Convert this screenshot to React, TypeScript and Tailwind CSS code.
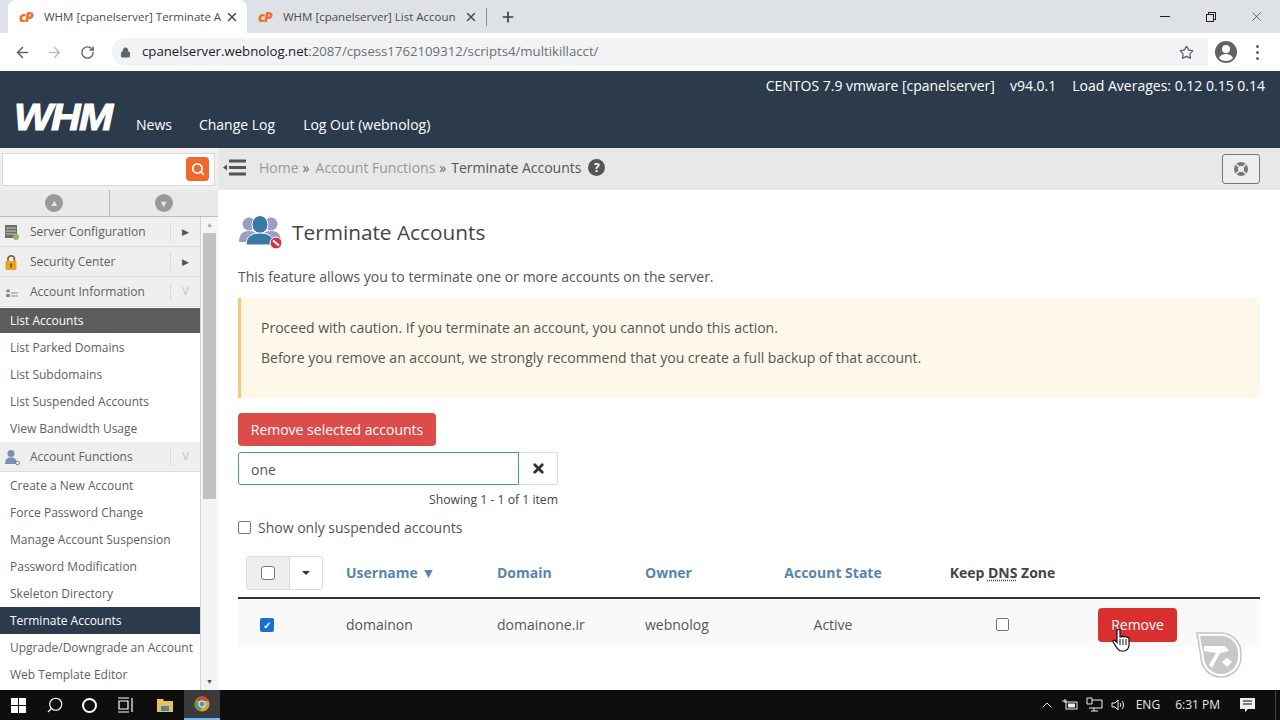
import { ArrowLeft, ArrowRight, ChevronUp, Lock, Plus, RotateCw, Search, Star, X } from 'lucide-react';

const infoLinks = ['List Parked Domains', 'List Subdomains', 'List Suspended Accounts', 'View Bandwidth Usage'];
const functionLinks = ['Create a New Account', 'Force Password Change', 'Manage Account Suspension', 'Password Modification', 'Skeleton Directory'];

function Favicon() {
  return <span className="w-[18px] shrink-0 text-[14px] leading-none font-extrabold italic tracking-[-1px] text-[#f0702c]">cP</span>;
}

function Tab({ title, active }: { title: string; active?: boolean }) {
  return (
    <div className={`flex h-[33px] w-[239px] items-center pl-[11px] pr-[8px] ${active ? 'rounded-t-lg bg-white' : ''}`}>
      <Favicon />
      <span className="ml-[7px] flex-1 overflow-hidden text-[11.5px] whitespace-nowrap text-[#4a4c50]">{title}</span>
      <X size={14} strokeWidth={2.5} className="shrink-0 text-[#4a4c50]" />
    </div>
  );
}

function SectionIcon({ kind }: { kind: string }) {
  if (kind === 'server') {
    return (
      <svg width="18" height="18" viewBox="0 0 18 18" className="shrink-0">
        <rect x="3" y="2" width="12" height="13" fill="#6b7168" />
        <path d="M4 5h10M4 8h10M4 11h10" stroke="#c9ccc6" strokeWidth="1" />
        <circle cx="14" cy="14" r="3" fill="#8fb96a" />
      </svg>
    );
  }
  if (kind === 'lock') {
    return (
      <svg width="18" height="18" viewBox="0 0 18 18" className="shrink-0">
        <path d="M6 8V6a3.2 3.2 0 0 1 6.400 0v2" fill="none" stroke="#7a6a3a" strokeWidth="1.800" />
        <rect x="3.500" y="8" width="11" height="9" rx="1" fill="#eda321" />
        <rect x="8.300" y="10.500" width="1.600" height="4" fill="#6d4c10" />
      </svg>
    );
  }
  if (kind === 'card') {
    return (
      <svg width="18" height="18" viewBox="0 0 18 18" className="shrink-0">
        <circle cx="6" cy="8" r="1.800" fill="#7f8c99" />
        <path d="M4 14v-3h4v3z" fill="#7f8c99" />
        <path d="M9 10h7M9 13h7" stroke="#a9b0b6" strokeWidth="1.500" />
      </svg>
    );
  }
  return (
    <svg width="18" height="18" viewBox="0 0 18 18" className="shrink-0">
      <circle cx="9" cy="5.500" r="3.500" fill="#7d8fb0" />
      <path d="M3 16c0-5 2.500-6.500 6-6.500s6 1.500 6 6.500z" fill="#7d8fb0" />
      <circle cx="15.500" cy="15" r="1.800" fill="#fff" stroke="#777" />
    </svg>
  );
}

function Section({ label, kind, open }: { label: string; kind: string; open?: boolean }) {
  return (
    <div className="flex h-[30px] items-center border-b border-[#dcdcdc] bg-[#efefef] pl-[2px] text-[12px] text-[#5f6062]">
      <SectionIcon kind={kind} />
      <span className="ml-[10px] flex-1">{label}</span>
      <span className="h-[18px] w-px bg-[#dadada]" />
      <span className="flex w-[29px] justify-center text-[9px] text-[#555]">
        {open ? <span className="text-[11px] text-[#c4c4c4]">V</span> : '▶'}
      </span>
    </div>
  );
}

function MenuLink({ label }: { label: string }) {
  return <div className="flex h-[27px] items-center pl-[10px] text-[12px] whitespace-nowrap text-[#5f6062]">{label}</div>;
}

function Sidebar() {
  return (
    <aside className="flex w-[218px] shrink-0 flex-col overflow-hidden">
      <div className="flex h-[27px] shrink-0 border-b border-[#bdbdbd] bg-[#e9e9e9]">
        <div className="flex flex-1 items-center justify-center border-r border-[#bdbdbd]">
          <span className="flex h-[18px] w-[18px] items-center justify-center rounded-full bg-[#9a9a9a] pb-px text-[9px] leading-none text-[#e9e9e9]">▲</span>
        </div>
        <div className="flex flex-1 items-center justify-center">
          <span className="flex h-[18px] w-[18px] items-center justify-center rounded-full bg-[#9a9a9a] pt-px text-[9px] leading-none text-[#e9e9e9]">▼</span>
        </div>
      </div>
      <div className="flex min-h-0 flex-1">
        <nav className="w-[201px] shrink-0 overflow-hidden border-r border-[#d4d4d4] bg-white">
          <Section label="Server Configuration" kind="server" />
          <Section label="Security Center" kind="lock" />
          <Section label="Account Information" kind="card" open />
          <div className="mt-px flex h-[25px] items-center bg-[#5c5c5c] pl-[10px] text-[12px] text-white">List Accounts</div>
          <div className="pt-px">
            {infoLinks.map((link) => (
              <MenuLink key={link} label={link} />
            ))}
          </div>
          <Section label="Account Functions" kind="user" open />
          {functionLinks.map((link) => (
            <MenuLink key={link} label={link} />
          ))}
          <div className="flex h-[27px] items-center bg-[#2c3b4b] pl-[10px] text-[12px] text-white">Terminate Accounts</div>
          <MenuLink label="Upgrade/Downgrade an Account" />
          <MenuLink label="Web Template Editor" />
        </nav>
        <div className="flex w-[17px] shrink-0 flex-col bg-[#f4f4f4] pl-[2px]">
          <div className="flex h-[16px] items-center justify-center pr-[2px] text-[7px] text-[#a8a8a8]">▲</div>
          <div className="h-[266px] w-[13px] bg-[#c1c1c1]" />
          <div className="flex-1" />
          <div className="flex h-[16px] items-center justify-center pr-[2px] text-[7px] text-[#505050]">▼</div>
        </div>
      </div>
    </aside>
  );
}

function TitleIcon() {
  return (
    <svg width="46" height="36" viewBox="0 0 46 36" className="shrink-0">
      <circle cx="11" cy="10" r="6.500" fill="#9a9dc6" />
      <path d="M1 28c0-8 4-11 10-11s10 3 10 11z" fill="#9a9dc6" />
      <circle cx="33" cy="10" r="6.500" fill="#9a9dc6" />
      <path d="M23 28c0-8 4-11 10-11s10 3 10 11z" fill="#9a9dc6" />
      <ellipse cx="22" cy="10.500" rx="8" ry="9" fill="#3a7aa8" stroke="#fff" />
      <path d="M8 31c0-9 6-12 14-12s14 3 14 12z" fill="#3a7aa8" stroke="#fff" />
      <circle cx="38" cy="29" r="6" fill="#d03546" stroke="#fff" />
      <path d="M35 26.500l6 5" stroke="#fff" strokeWidth="2" />
    </svg>
  );
}

function TableHeader() {
  return (
    <div className="grid h-[43px] grid-cols-[108px_151px_148px_118px_140px_199px_1fr] items-center pb-[6px] text-[14px] font-bold">
      <div className="pl-[8px]">
        <div className="flex h-[34px] w-[77px] rounded-[3px] border border-[#dcdcdc]">
          <div className="flex w-[43px] items-center justify-center border-r border-[#dcdcdc] bg-[#eeeeee]">
            <span className="h-[14px] w-[14px] rounded-[3px] border border-[#767676] bg-white" />
          </div>
          <div className="flex flex-1 items-center justify-center">
            <svg width="8" height="4" viewBox="0 0 8 4">
              <path d="M0 0h8L4 4z" fill="#333" />
            </svg>
          </div>
        </div>
      </div>
      <div className="text-[#5b84ab]">Username ▼</div>
      <div className="text-[#5b84ab]">Domain</div>
      <div className="text-[#5b84ab]">Owner</div>
      <div className="text-center text-[#5b84ab]">Account State</div>
      <div className="text-center text-[#444]">
        Keep <span className="underline decoration-dotted underline-offset-2">DNS</span> Zone
      </div>
      <div />
    </div>
  );
}

function TableRow() {
  return (
    <div className="grid h-[48px] grid-cols-[108px_151px_148px_118px_140px_199px_1fr] items-center bg-[#f9f9f9] pt-[3px] text-[14px] text-[#555]">
      <div className="pl-[22px]">
        <span className="flex h-[14px] w-[14px] items-center justify-center rounded-[2px] bg-[#1a6fd6] text-[10px] leading-none font-bold text-white">✓</span>
      </div>
      <div>domainon</div>
      <div>domainone.ir</div>
      <div>webnolog</div>
      <div className="text-center">Active</div>
      <div className="flex justify-center">
        <span className="h-[13px] w-[13px] rounded-[2px] border border-[#767676] bg-white" />
      </div>
      <div className="-ml-[4px]">
        <button className="h-[34px] w-[79px] rounded-[4px] bg-[#d9302f] text-[14px] text-white">Remove</button>
      </div>
    </div>
  );
}

function Content() {
  return (
    <main className="min-w-0 flex-1 bg-white pt-[24px] pr-[20px] pl-[20px] text-[14px] text-[#555]">
      <div className="flex h-[36px] items-center">
        <TitleIcon />
        <h1 className="ml-[8px] text-[20.8px] leading-none font-normal text-[#444]">Terminate Accounts</h1>
      </div>
      <p className="mt-[17px] leading-[20px]">This feature allows you to terminate one or more accounts on the server.</p>
      <div className="mt-[11px] h-[100px] border-l-[3px] border-[#f3cd7d] bg-[#fdf8ea] pt-[20px] pl-[20px]">
        <p className="leading-[20px]">Proceed with caution. If you terminate an account, you cannot undo this action.</p>
        <p className="mt-[10px] leading-[20px]">Before you remove an account, we strongly recommend that you create a full backup of that account.</p>
      </div>
      <button className="mt-[15px] block h-[33px] w-[198px] rounded-[4px] bg-[#dc4c4b] text-[14px] text-white">Remove selected accounts</button>
      <div className="mt-[6px] flex h-[33px] w-[320px]">
        <div className="flex w-[281px] items-center rounded-l-[3px] border border-[#4a9d80] bg-white pt-px pl-[12px]">one</div>
        <div className="flex flex-1 items-center justify-center rounded-r-[3px] border border-l-0 border-[#dcdcdc] font-bold text-[#333]">
          <X size={15} strokeWidth={4.5} />
        </div>
      </div>
      <div className="mt-[7px] w-[320px] text-right text-[12.2px] leading-[16px] text-[#444]">Showing 1 - 1 of 1 item</div>
      <label className="mt-[9px] flex h-[20px] items-center">
        <span className="h-[13px] w-[13px] rounded-[2px] border border-[#767676] bg-white" />
        <span className="ml-[7px]">Show only suspended accounts</span>
      </label>
      <div className="mt-[17px] border-b-2 border-[#333]">
        <TableHeader />
      </div>
      <TableRow />
    </main>
  );
}

export default function App() {
  return (
    <div className="relative flex h-[720px] w-[1280px] flex-col overflow-hidden bg-white font-['Open_Sans',sans-serif]">
      {/* browser tabs */}
      <div className="flex h-[33px] shrink-0 items-center bg-[#dee1e6] pl-[8px]">
        <Tab title="WHM [cpanelserver] Terminate A" active />
        <Tab title="WHM [cpanelserver] List Accoun" />
        <span className="h-[18px] w-px bg-[#8d9094]" />
        <Plus size={16} strokeWidth={2.5} className="ml-[13px] text-[#3c4043]" />
        <div className="ml-auto flex items-center pr-[16px] text-[#333]">
          <span className="h-px w-[10px] bg-[#222]" />
          <span className="relative ml-[36px] h-[10px] w-[10px]">
            <span className="absolute top-0 right-0 h-[8px] w-[8px] border border-[#222]" />
            <span className="absolute bottom-0 left-0 h-[8px] w-[8px] border border-[#222] bg-[#dee1e6]" />
          </span>
          <X size={15} strokeWidth={1} className="ml-[33px] text-[#222]" />
        </div>
      </div>

      {/* browser toolbar */}
      <div className="flex h-[38px] shrink-0 items-center bg-white pl-[14px] text-[#5f6368]">
        <ArrowLeft size={17} strokeWidth={2.2} className="text-[#5f6368]" />
        <ArrowRight size={17} strokeWidth={2.2} className="ml-[15px] text-[#bcc0c4]" />
        <RotateCw size={15} strokeWidth={2.2} className="ml-[17px]" />
        <div className="ml-[17px] flex h-[28px] w-[1096px] items-center rounded-l-full bg-[#f1f3f4] pl-[8px]">
          <Lock size={11} fill="#5f6368" strokeWidth={2} />
          <span className="ml-[11px] text-[13.2px] text-[#6c6f73]">
            <span className="text-[#202124]">cpanelserver.webnolog.net</span>:2087/cpsess1762109312/scripts4/multikillacct/
          </span>
          <Star size={15} strokeWidth={2} className="ml-auto mr-[14px] text-[#5f6368]" />
        </div>
        <svg width="24" height="24" viewBox="0 0 24 24" className="ml-[6px] shrink-0">
          <circle cx="12" cy="12" r="11" fill="#5f6368" />
          <circle cx="12" cy="9" r="4" fill="#fff" />
          <path d="M5 18c1.500-3 4-4 7-4s5.500 1 7 4c-1.500 2-4 3-7 3s-5.500-1-7-3z" fill="#fff" />
        </svg>
        <div className="ml-[18px] flex flex-col gap-[3px]">
          <span className="h-[3px] w-[3px] rounded-full bg-[#5f6368]" />
          <span className="h-[3px] w-[3px] rounded-full bg-[#5f6368]" />
          <span className="h-[3px] w-[3px] rounded-full bg-[#5f6368]" />
        </div>
      </div>

      {/* WHM header */}
      <header className="h-[77px] shrink-0 bg-[#2c3b4b] text-[14px] text-white">
        <div className="flex h-[29px] items-center justify-end pr-[15px]">
          <span>CENTOS 7.9 vmware [cpanelserver]</span>
          <span className="ml-[15px]">v94.0.1</span>
          <span className="ml-[16px]">Load Averages: 0.12 0.15 0.14</span>
        </div>
        <div className="flex items-center pl-[14px]">
          <span className="inline-block w-[101px] origin-left scale-x-[1.14] font-['Liberation_Sans',sans-serif] text-[36px] leading-[36px] font-bold tracking-[-1.500px] italic [-webkit-text-stroke:1px_white]">WHM</span>
          <div className="flex items-center pt-[12px]">
            <span className="ml-[21px]">News</span>
            <span className="ml-[27px]">Change Log</span>
            <span className="ml-[28px]">Log Out (webnolog)</span>
          </div>
        </div>
      </header>

      {/* search + breadcrumbs */}
      <div className="flex h-[42px] shrink-0 bg-[#e8e8e8]">
        <div className="flex w-[218px] shrink-0 items-center bg-[#f0f0f0] pl-[2px]">
          <div className="flex h-[33px] w-[213px] items-center justify-end border border-[#d8d8d8] bg-white pr-[5px]">
            <span className="flex h-[24px] w-[23px] items-center justify-center rounded-[4px] bg-[#f0692c] text-white">
              <Search size={14} strokeWidth={3} />
            </span>
          </div>
        </div>
        <div className="flex flex-1 items-center pr-[20px] text-[14px] text-[#999]">
          <div className="flex items-center pb-[3px]">
            <svg width="24" height="20" viewBox="0 0 24 20" className="ml-[5px] shrink-0">
              <path d="M6 3h17M6 9.500h17M6 16h17" stroke="#555" strokeWidth="2.800" />
              <path d="M0 9.500l4-3v6z" fill="#555" />
            </svg>
            <span className="ml-[12px]">Home</span>
            <span className="ml-[4px] text-[#666]">»</span>
            <span className="ml-[6px]">Account Functions</span>
            <span className="ml-[4px] text-[#666]">»</span>
            <span className="ml-[5px] text-[#555]">Terminate Accounts</span>
            <span className="ml-[7px] flex h-[17px] w-[17px] items-center justify-center rounded-full bg-[#555] text-[12px] leading-none font-bold text-white">?</span>
          </div>
          <span className="ml-auto flex h-[30px] w-[38px] items-center justify-center rounded-[3px] border border-[#777] bg-[#eeeeee]">
            <svg width="16" height="16" viewBox="0 0 16 16">
              <circle cx="8" cy="8" r="7" fill="#777" />
              <path d="M3 3l10 10M13 3L3 13" stroke="#eee" strokeWidth="1.500" />
              <circle cx="8" cy="8" r="3" fill="#eee" />
            </svg>
          </span>
        </div>
      </div>

      <div className="flex min-h-0 flex-1">
        <Sidebar />
        <Content />
      </div>

      {/* windows taskbar */}
      <footer className="flex h-[30px] shrink-0 items-center bg-[#0e0e0e] text-white">
        <div className="grid w-[36px] shrink-0 grid-cols-[7px_7px] justify-center gap-px pl-px">
          <span className="h-[7px] bg-white" />
          <span className="h-[7px] bg-white" />
          <span className="h-[7px] bg-white" />
          <span className="h-[7px] bg-white" />
        </div>
        <Search size={18} strokeWidth={1.500} className="ml-[10px] -scale-x-100" />
        <span className="ml-[18px] h-[15px] w-[15px] rounded-full border-2 border-white" />
        <svg width="18" height="16" viewBox="0 0 18 16" className="ml-[20px]">
          <path d="M1 1h11M1 15h11M2 4h9v8H2zM15 1v14" fill="none" stroke="#fff" strokeWidth="1.200" />
        </svg>
        <svg width="18" height="16" viewBox="0 0 18 16" className="ml-[21px]">
          <path d="M1 2h6l1 2h9v11H1z" fill="#e8c15a" />
          <rect x="5" y="9" width="8" height="5" fill="#4f86a8" />
        </svg>
        <div className="ml-[10px] flex h-[30px] w-[36px] items-center justify-center border-b-2 border-[#76b9ed] bg-[#3b3b3b]">
          <svg width="16" height="16" viewBox="0 0 16 16">
            <circle cx="8" cy="8" r="7.500" fill="#d6a73a" />
            <path d="M8 .5A7.500 7.500 0 0 1 15 5H8 2A7.500 7.500 0 0 1 8 .5z" fill="#c8483a" />
            <path d="M1.500 4.500A7.500 7.500 0 0 0 6 15l3-5z" fill="#5b9a4c" />
            <circle cx="8" cy="8" r="3.200" fill="#4a8fd8" stroke="#fff" />
          </svg>
        </div>
        <div className="ml-auto flex h-full items-center pr-[4px] text-[12px] text-[#e6e6e6]">
          <ChevronUp size={16} strokeWidth={1.500} />
          <svg width="16" height="14" viewBox="0 0 16 14" className="ml-[7px]">
            <rect x="4" y="4" width="11" height="7" fill="none" stroke="#eee" />
            <rect x="6" y="5.500" width="7" height="4" fill="#eee" />
            <path d="M3 1v4M0 3h5" stroke="#eee" />
          </svg>
          <svg width="17" height="16" viewBox="0 0 17 16" className="ml-[8px]">
            <path d="M1 1h5v6H1zM6 3h10v8H3M8 11v3M5 14h7" fill="none" stroke="#eee" />
          </svg>
          <svg width="16" height="14" viewBox="0 0 16 14" className="ml-[8px]">
            <path d="M1 5h3l3-3v10l-3-3H1zM9 5c1 1 1 3 0 4M11 3c2 2 2 6 0 8" fill="none" stroke="#eee" />
          </svg>
          <span className="ml-[9px]">ENG</span>
          <span className="ml-[15px]">6:31 PM</span>
          <svg width="17" height="16" viewBox="0 0 17 16" className="ml-[19px]">
            <path d="M1 1h15v11H9l-3 3v-3H1z" fill="#eee" />
            <path d="M4 4h9M4 7h9" stroke="#0e0e0e" />
          </svg>
          <span className="ml-[19px] h-full w-px bg-[#444]" />
        </div>
      </footer>

      {/* watermark */}
      <svg width="48" height="48" viewBox="0 0 48 48" className="absolute top-[631px] left-[1195px]">
        <path d="M2 2h24a20 20 0 0 1 20 20v4a20 20 0 0 1-40 0z" fill="none" stroke="#c4c4c4" strokeWidth="1.500" />
        <path d="M5 5h21a17 17 0 0 1 17 17v4a17 17 0 0 1-34 0z" fill="#c8c8c8" />
        <path d="M9 15h21l4 5-9 2-8 15-3-3 7-12-12-2z" fill="#fff" />
        <path d="M27 31l5-4 5 4-5 5z" fill="#fff" />
      </svg>

      {/* mouse pointer */}
      <svg width="18" height="24" viewBox="0 0 18 24" className="absolute top-[628px] left-[1112px]">
        <path d="M5 2c1-1 2.500-1 3 0v7l1 0c1-1 2-1 3 0 1-1 2-1 3 .500 1-.5 2 0 2 1.500v6c0 3-2 6-5 6H9c-2 0-3-2-4-3l-4-6c-.5-1 1-2.500 2-1.500l2 2z" fill="#fff" stroke="#111" strokeWidth="1.200" />
        <path d="M8 11v6M11 11v6M14 11v6" stroke="#111" />
      </svg>
    </div>
  );
}
